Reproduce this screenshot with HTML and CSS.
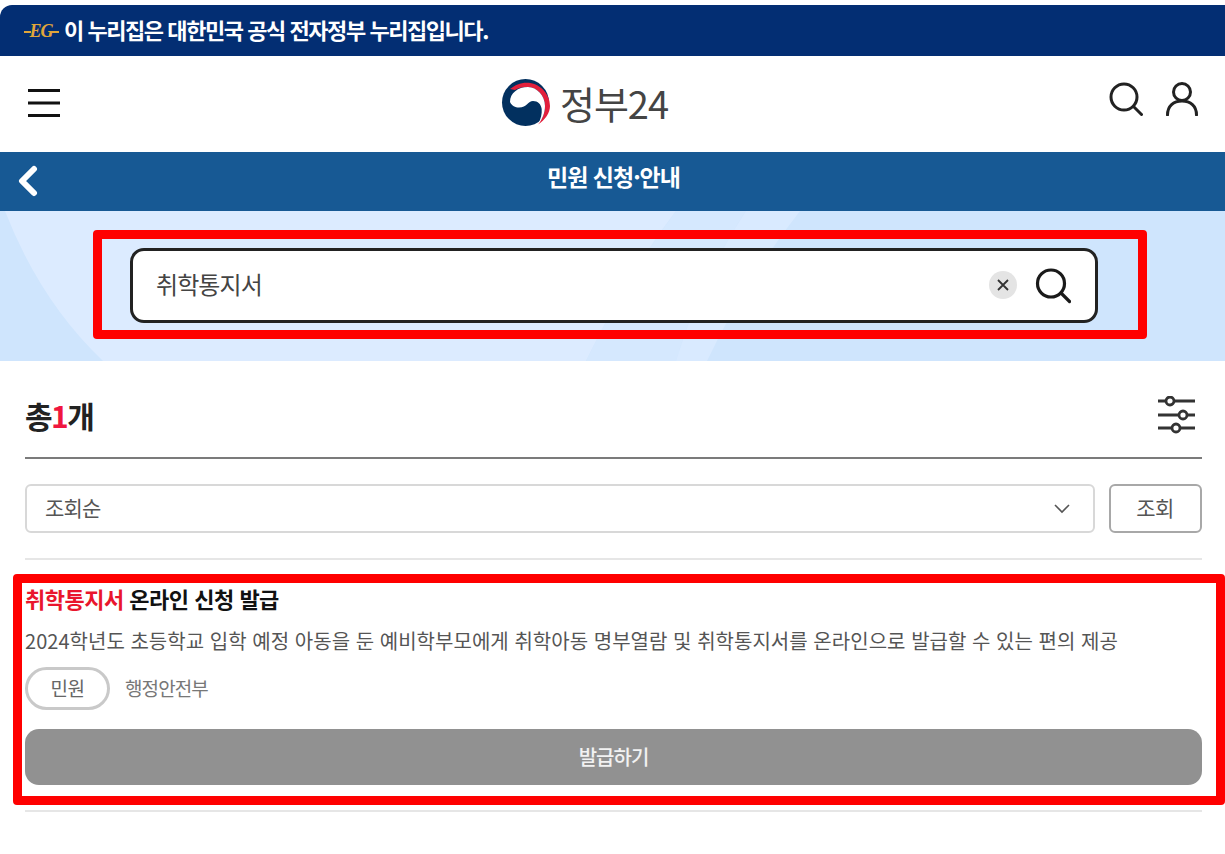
FILE: index.html
```html
<!DOCTYPE html>
<html lang="ko">
  <head>
    <meta charset="UTF-8" />
    <meta name="viewport" content="width=device-width, initial-scale=1.0" />
    <title>민원 신청·안내</title>
    <link rel="stylesheet" href="styles.css">
  </head>

  <body>
    <div class="gov-banner">
      <span class="eg-mark">EG</span>
      <span>이 누리집은 대한민국 공식 전자정부 누리집입니다.</span>
    </div>

    <header class="site-header">
      <svg class="menu-icon" width="32" height="28" viewBox="0 0 32 28" stroke="#111" stroke-width="3">
        <path d="M0 1.5h32M0 14h32M0 26.5h32"/>
      </svg>
      <div class="logo">
        <svg width="50" height="48" viewBox="0 0 50 48">
          <circle cx="24.5" cy="23.5" r="23.5" fill="#02305f"/>
          <path d="M9 10C14 6 19 3.700 25.700 3.700C38 3.700 49 14 49 27C49 34 44 41 37 45.500C41 41 44 34 44 27C44 17 36 8 27 8C21 8 17 9 14 11z" fill="#e2203c"/>
          <path d="M9 23C9 14 17 8 27 8C36 8 44 17 44 27C44 34 41 41 37 45C40 40 41 35 40.700 30C40 25 37 22 32 22C27 22 26 28.500 18 28.500C14 28.500 11 27 9 23z" fill="#fff"/>
        </svg>
        <span class="logo-text">정부24</span>
      </div>
      <div class="header-icons">
        <svg width="34" height="34" viewBox="0 0 34 34" fill="none" stroke="#222" stroke-width="3" stroke-linecap="round">
          <circle cx="15" cy="15" r="13"/>
          <path d="M24.500 24.500l8 8"/>
        </svg>
        <svg width="32" height="34" viewBox="0 0 32 34" fill="none" stroke="#222" stroke-width="3" stroke-linecap="round">
          <circle cx="16" cy="10" r="8.500"/>
          <path d="M1.500 33c0-9 6-14 14.500-14s14.500 5 14.500 14"/>
        </svg>
      </div>
    </header>

    <nav class="title-bar">
      <svg class="back-icon" width="22" height="32" viewBox="0 0 22 32" fill="none" stroke="#fff" stroke-width="6" stroke-linecap="round" stroke-linejoin="round">
        <path d="M17 4L5 16l12 12"/>
      </svg>
      <h1>민원 신청·안내</h1>
    </nav>

    <section class="search-area">
      <svg class="search-bg" width="1225" height="150" viewBox="0 0 1225 150">
        <path d="M5 0Q40 90 103 150L586 150Q630 60 676 0z" fill="#dcebff"/>
        <path d="M676 0L746 0Q700 70 676 150L586 150Q630 60 676 0z" fill="#d5e8fe"/>
        <path d="M746 0L800 0Q745 70 707 150L676 150Q700 70 746 0z" fill="#d9eaff"/>
      </svg>
      <div class="search-box">
        <span class="search-text">취학통지서</span>
        <span class="clear-btn">
          <svg width="12" height="12" viewBox="0 0 12 12" stroke="#333" stroke-width="1.800"><path d="M1 1l10 10M11 1L1 11"/></svg>
        </span>
        <svg width="36" height="36" viewBox="0 0 36 36" fill="none" stroke="#1a1a1a" stroke-width="3.200" stroke-linecap="round">
          <circle cx="16" cy="15.500" r="13.500"/>
          <path d="M26 25l8.500 8.500"/>
        </svg>
      </div>
      <div class="mark mark-search"></div>
    </section>

    <main class="results">
      <div class="results-head">
        <h2>총<em>1</em>개</h2>
        <svg class="filter-icon" width="37" height="38" viewBox="0 0 37 38" fill="none" stroke="#333" stroke-width="2.800">
          <path d="M0 5h8M16 5h21M0 19h21M29 19h8M0 32h14M22 32h15"/>
          <circle cx="12" cy="5" r="4"/>
          <circle cx="25" cy="19" r="4"/>
          <circle cx="18" cy="32" r="4"/>
        </svg>
      </div>

      <div class="sort-row">
        <div class="sort-select">
          <span class="sort-label">조회순</span>
          <svg width="16" height="10" viewBox="0 0 16 10" fill="none" stroke="#555" stroke-width="1.600"><path d="M1 1l7 7 7-7"/></svg>
        </div>
        <button class="sort-btn">조회</button>
      </div>

      <article class="result-card">
        <h3><em>취학통지서</em> 온라인 신청 발급</h3>
        <p>2024학년도 초등학교 입학 예정 아동을 둔 예비학부모에게 취학아동 명부열람 및 취학통지서를 온라인으로 발급할 수 있는 편의 제공</p>
        <div class="meta">
          <span class="tag">민원</span>
          <span class="agency">행정안전부</span>
        </div>
        <button class="issue-btn">발급하기</button>
        <div class="mark mark-card"></div>
      </article>
    </main>
  </body>
</html>
```

FILE: styles.css
```css
* { box-sizing: border-box; font-family: "Noto Sans CJK KR", "Noto Sans", sans-serif; }
body { margin: 0; background-color: #fff; }
h1, h2, h3, p { margin: 0; }
em { font-style: normal; }

.gov-banner { height: 51px; margin-top: 5px; padding: 0 0 3px 25px; display: flex; align-items: center; gap: 7px; background-color: #032e73; border-top-left-radius: 12px; color: #fff; font-size: 22px; font-weight: 700; letter-spacing: -1.450px; }
.eg-mark { width: 32px; padding-top: 5px; display: flex; align-items: center; justify-content: center; color: #e0a63a; font-family: "Liberation Serif", serif; font-size: 18px; font-style: italic; font-weight: 700; letter-spacing: -1px; }
.eg-mark::before, .eg-mark::after { content: ""; flex: none; width: 7px; height: 2px; margin: 0 -1px; background-color: #e0a63a; }

.site-header { height: 96px; padding: 0 27px 0 28px; display: flex; align-items: center; justify-content: space-between; }
.menu-icon { margin-bottom: 2px; }
.logo { display: flex; align-items: center; gap: 9px; margin-bottom: 3px; }
.logo-text { color: #444; font-size: 38px; letter-spacing: -1px; line-height: 48px; }
.header-icons { display: flex; gap: 23px; margin-top: -10px; }

.title-bar { height: 59px; padding-left: 17px; display: flex; align-items: center; background-color: #175994; }
.title-bar h1 { flex: 1; margin-right: 37px; padding-bottom: 12px; text-align: center; color: #fff; font-size: 23px; font-weight: 700; letter-spacing: -1px; }
.back-icon { margin-bottom: 1px; }

.search-area { height: 150px; padding-top: 37px; position: relative; background-color: #cfe5fd; }
.search-bg { position: absolute; left: 0; top: 0; }
.search-box { width: 968px; height: 75px; margin-left: 130px; padding: 0 24px 0 23px; display: flex; align-items: center; background-color: #fff; border: 3px solid #222; border-radius: 14px; position: relative; }
.search-text { flex: 1; padding-bottom: 4px; color: #444; font-size: 24px; letter-spacing: -0.900px; }
.clear-btn { width: 28px; height: 28px; margin: 0 18px 2px 0; display: flex; align-items: center; justify-content: center; background-color: #e4e4e4; border-radius: 50%; }

.mark { position: absolute; border: 9px solid #f00; border-radius: 4px; }
.mark-search { left: 93px; top: 19px; width: 1054px; height: 109px; }
.mark-card { left: -12px; top: 14px; width: 1212px; height: 231px; }

.results { padding: 0 23px 0 25px; }
.results-head { height: 98px; padding-top: 12px; display: flex; align-items: center; justify-content: space-between; border-bottom: 2px solid #7b7b7b; }
.results-head h2 { color: #222; font-size: 30px; font-weight: 700; letter-spacing: -1.500px; }
.results-head h2 em { color: #f0163f; }
.filter-icon { margin-right: 7px; }

.sort-row { height: 101px; padding-top: 25px; display: flex; gap: 14px; border-bottom: 2px solid #e6e6e6; }
.sort-select { flex: 1; height: 49px; padding: 0 23px 0 18px; display: flex; align-items: center; justify-content: space-between; border: 2px solid #d8d8d8; border-radius: 6px; color: #555; font-size: 21px; letter-spacing: -0.800px; }
.sort-label { padding-bottom: 4px; }
.sort-btn { width: 93px; height: 49px; padding: 0 1px 4px 0; background-color: #fff; border: 2px solid #a8a8a8; border-radius: 6px; color: #555; font-size: 21px; letter-spacing: -0.500px; }

.result-card { height: 252px; padding-top: 22px; border-bottom: 2px solid #e6e6e6; position: relative; }
.result-card h3 { color: #111; font-size: 22px; font-weight: 700; line-height: 32px; letter-spacing: -0.500px; }
.result-card h3 em { color: #e9162d; }
.result-card p { margin-top: 12px; color: #555; font-size: 20px; line-height: 30px; letter-spacing: 0.030px; white-space: nowrap; }
.meta { margin-top: 11px; display: flex; align-items: center; gap: 15px; }
.tag { width: 85px; height: 43px; padding-bottom: 3px; display: flex; align-items: center; justify-content: center; border: 3px solid #c9c9c9; border-radius: 22px; color: #666; font-size: 19px; letter-spacing: -0.500px; }
.agency { padding-bottom: 3px; color: #777; font-size: 19px; letter-spacing: -0.900px; }
.issue-btn { width: 100%; height: 56px; margin-top: 19px; padding-bottom: 2px; background-color: #919191; border: 0; border-radius: 14px; color: #f2f2f2; font-size: 20px; font-weight: 500; letter-spacing: -1px; }
```
